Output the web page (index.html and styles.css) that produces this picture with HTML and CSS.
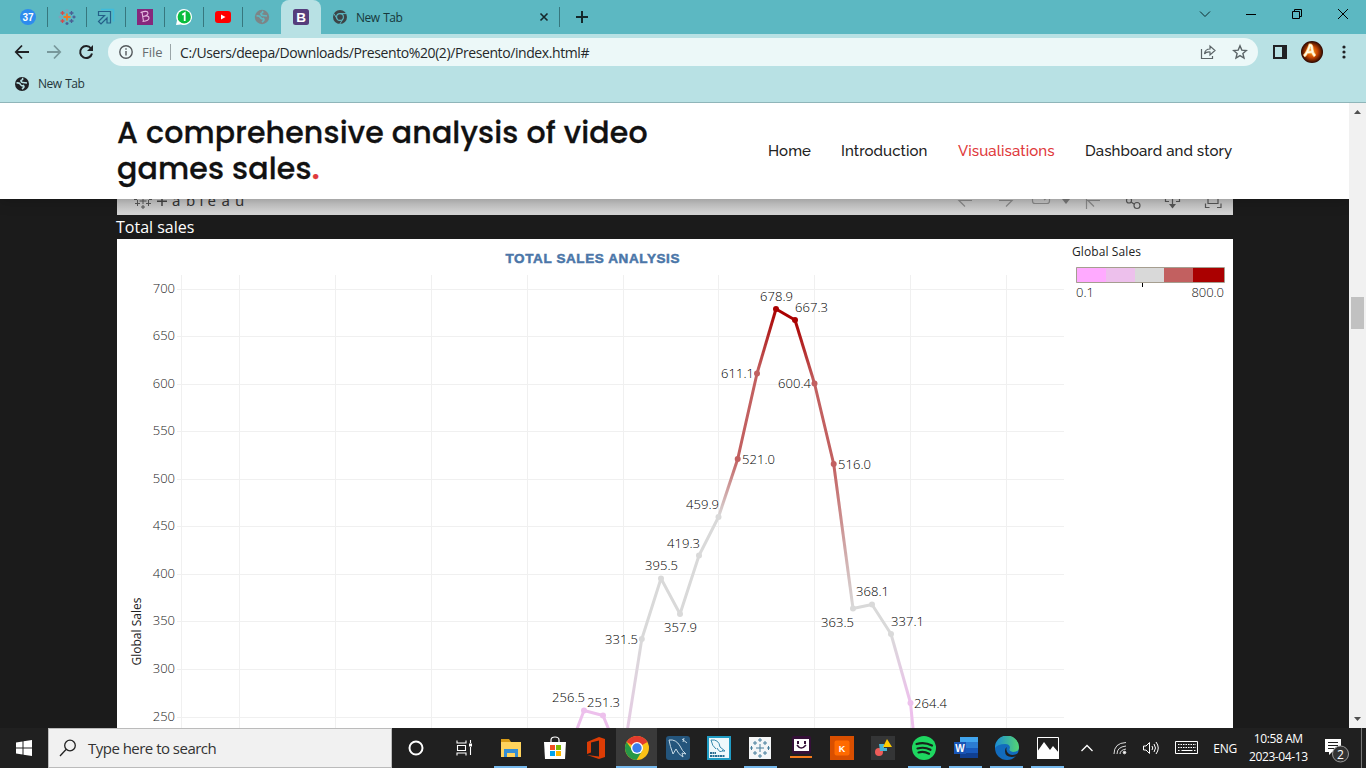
FILE: index.html
```
<!DOCTYPE html>
<html lang="en">
<head>
<meta charset="utf-8">
<title>Video games sales</title>
<link rel="stylesheet" href="styles.css">
</head>
<body>
<div class="screen">
  <div class="tabs">
    <div class="pin"><svg width="18" height="18"><circle cx="9" cy="9" r="8" fill="#2d8cee"/><text x="9" y="12.700" class="n37">37</text></svg></div>
    <div class="pin"><svg width="18" height="18" fill="none" stroke-width="1.3"><path stroke="#eb7a24" stroke-width="1.8" d="M9 5.500v7M5.500 9h7"/><path stroke="#d64a4a" d="M4.500 3v4M2.500 5h4M4.500 11v4M2.500 13h4"/><path stroke="#4a5f94" d="M13.500 3v4M11.500 5h4M13.500 11v4M11.500 13h4M9 14v3M7.500 15.500h3M16 7.500v3M14.500 9h3"/><path stroke="#82a0b8" d="M9 1v3M7.500 2.500h3M2 7.500v3M.5 9h3"/></svg></div>
    <div class="pin"><svg width="18" height="18" fill="none"><path d="M4 1.500h12.500v12" stroke="#3fbcdc" stroke-width="1.500"/><path d="M1.500 3.500h12v11.500h-3.500V10L4 16l-2.500-2.500L7.500 7.500h-6z" stroke="#245f88" stroke-width="1.200"/></svg></div>
    <div class="pin"><svg width="18" height="18"><path fill="#86287c" d="M1 1h16v16H1z"/><path d="M6 4l1.500 9.500M4.500 4.500q7-2.500 7.500.5 0 2.500-5 3.500 6-1.500 6 1.500 0 3-6.500 3.500" fill="none" stroke="#e5b8df" stroke-width="1.100"/></svg></div>
    <div class="pin"><svg width="18" height="18"><path fill="#fff" d="M9 1a8 8 0 1 1-3 15.400L1 17l1-4.500A8 8 0 0 1 9 1z"/><circle cx="9.200" cy="8.900" r="6.600" fill="#09bd3d"/><path d="M7.200 6.700L9.700 5.200v7.800" fill="none" stroke="#fff" stroke-width="1.800"/></svg></div>
    <div class="pin"><svg width="18" height="18"><rect x="1" y="3" width="16" height="12" rx="3" fill="#f00"/><path fill="#fff" d="M7 6.500v5L11.500 9z"/></svg></div>
    <div class="pin last"><svg width="18" height="18"><circle cx="9" cy="9" r="7.200" fill="#7c8587"/><path d="M3.500 8q3-.5 4 1.500t3 1q1.500 1.500-1.500 3.500M9 3.200q2 1-1 2.300 0 2 2 2l4 .5" fill="none" stroke="#5cb8c2" stroke-width="1.700"/></svg></div>
    <div class="active"><svg width="18" height="18"><rect x="1" y="1" width="16" height="16" rx="2.500" fill="#563d7c"/><text x="9" y="13.800" class="bs">B</text></svg></div>
    <div class="tab">
      <svg width="16" height="16"><circle cx="8" cy="8" r="7" fill="#3c4447"/><circle cx="8" cy="8" r="3.400" fill="none" stroke="#5cb8c2" stroke-width="1.100"/><path d="M8 4.600h6.500M5 9.700L1.800 4.500M11 9.700l-3.200 5.300" stroke="#5cb8c2"/></svg>
      <span class="tabname">New Tab</span>
      <svg class="x" width="10" height="10"><path d="M1.500 1.500l7 7m0-7l-7 7" stroke="#15282b" stroke-width="1.600"/></svg>
    </div>
    <svg class="plus" width="14" height="14"><path d="M7 1v12M1 7h12" stroke="#15282b" stroke-width="2"/></svg>
    <div class="win">
      <svg width="12" height="12" fill="none" stroke="#102a2d"><path d="M1 3.500l5 5 5-5"/></svg>
      <svg width="12" height="12"><path d="M1 6.500h10" stroke="#000"/></svg>
      <svg width="12" height="12" fill="none" stroke="#000"><path d="M1.500 3.500h7v7h-7zM3.500 3.500v-2h7v7h-2"/></svg>
      <svg width="12" height="12"><path d="M1 1l10 10m0-10L1 11" stroke="#000"/></svg>
    </div>
  </div>
  <div class="bar">
    <svg width="16" height="16" fill="none" stroke="#202124" stroke-width="1.800"><path d="M15 8H2M8 1.500L1.800 8 8 14.500"/></svg>
    <svg width="16" height="16" fill="none" stroke="#78989b" stroke-width="1.800"><path d="M1 8h13M8 1.500L14.200 8 8 14.500"/></svg>
    <svg width="16" height="16"><path d="M13 4.500A6 6 0 1 0 14 9.500" fill="none" stroke="#202124" stroke-width="2"/><path d="M15 1v6H9z" fill="#202124"/></svg>
    <div class="omni">
      <svg width="14" height="14" fill="none" stroke="#54595c" stroke-width="1.400"><circle cx="7" cy="7" r="6.200"/><path d="M7 6v4.500M7 3.300v1.500"/></svg>
      <span class="file">File</span><i class="sep"></i><span class="url">C:/Users/deepa/Downloads/Presento%20(2)/Presento/index.html#</span>
      <svg class="share" width="16" height="16" fill="none" stroke="#5b6467" stroke-width="1.200"><path d="M1.500 5v9.500h11V12M4.500 10q.5-5 5.500-5V2l5 4.500-5 4.500V8q-4-.3-5.500 2z"/></svg>
      <svg width="16" height="16" fill="none" stroke="#5b6467" stroke-width="1.400"><path d="M8 1.800l1.800 4.300 4.600.4-3.500 3 1.100 4.500-4-2.400L4 14l1.100-4.500-3.500-3 4.600-.4z"/></svg>
    </div>
    <svg class="side" width="14" height="14"><path fill="#202124" d="M0 0h14v14H0z"/><path fill="#b8e1e4" d="M2 2h7v10H2z"/></svg>
    <svg class="ava" width="22" height="22"><defs><radialGradient id="fire"><stop offset="0" stop-color="#f79a20"/><stop offset=".5" stop-color="#c84600"/><stop offset="1" stop-color="#260500"/></radialGradient></defs><circle cx="11" cy="11" r="11" fill="url(#fire)"/><path d="M3 15q3-2 6-11 2 0 2 4t3 7M5.500 11.500l7-1" stroke="#ffc873" stroke-width="3.200" fill="none"/><path d="M3 15q3-2 6-11 2 0 2 4t3 7M5.500 11.500l7-1" stroke="#fffbe8" stroke-width="1.700" fill="none"/></svg>
    <svg class="dots" width="4" height="14" fill="#202124"><circle cx="2" cy="2" r="1.600"/><circle cx="2" cy="7" r="1.600"/><circle cx="2" cy="12" r="1.600"/></svg>
  </div>
  <div class="marks"><svg width="14" height="14"><circle cx="7" cy="7" r="7" fill="#202124"/><path d="M1.500 6q3-.5 4 1.500t3 1q1.500 1.500-1.500 3.500M7 1.200q2 1-1 2.300 0 2 2 2l4 .5" fill="none" stroke="#b8e1e4" stroke-width="1.600"/></svg><span class="mark">New Tab</span></div>
  <div class="view">
    <div class="page">
      <div class="head">
        <h1 class="brand">A comprehensive analysis of video<br>games sales<b class="dot">.</b></h1>
        <div class="nav"><span class="n1">Home</span><span class="n2">Introduction</span><span class="n3">Visualisations</span><span class="n4">Dashboard and story</span></div>
      </div>
      <div class="wrap">
        <svg class="tableau" width="1116" height="16" viewBox="117 199 1116 16">
          <g fill="none" stroke="#555"><path d="M143 198v6M139.500 201h7M137.500 200v6M135 203.500h5M148.500 200v6M146 203.500h5M143 205v4M141 207h4M134 199.500h3M149 199.500h3"/></g>
          <path d="M162 198v8M157 201.200h10" stroke="#444" stroke-width="1.500"/>
          <text class="tlogo" x="172 186 199.500 207.500 221.500 235" y="206">ableau</text>
          <g fill="none" stroke="#888" stroke-width="1.200"><path d="M972 200.500h-13l6 6M999 200.500h13l-6 6M1032.500 198v3q0 2.500 2.500 2.500h12q2.500 0 2.500-2.500v-3M1044 200l3-2M1086.500 198v11M1100 200.500h-12l6 6"/></g>
          <path d="M1062 199h8l-4 5z" fill="#777"/>
          <g fill="none" stroke="#555" stroke-width="1.200"><circle cx="1129" cy="200.500" r="2.500"/><circle cx="1137" cy="205.500" r="3"/><path d="M1131 202l3 2M1169 201.500h-3.500V198M1176 201.500h3.500V198M1172.500 198v7M1205.500 203.500v4h4M1217 207.500h4v-4M1208 198v5.500h10V198"/></g>
          <path d="M1169 204h7l-3.500 4.500z" fill="#555"/>
        </svg>
        <div class="cap"><span class="captxt">Total sales</span></div>
        <svg class="chart" width="1116" height="489" viewBox="117 239 1116 489">
          <defs>
            <linearGradient id="a" gradientUnits="userSpaceOnUse" x1="0" y1="745" x2="0" y2="639"><stop stop-color="#e8c8e6"/><stop offset="1" stop-color="#d9d9d9"/></linearGradient>
            <linearGradient id="b" gradientUnits="userSpaceOnUse" x1="0" y1="517" x2="0" y2="459"><stop stop-color="#d9d9d9"/><stop offset="1" stop-color="#c26060"/></linearGradient>
            <linearGradient id="c" gradientUnits="userSpaceOnUse" x1="0" y1="373" x2="0" y2="309"><stop stop-color="#c26060"/><stop offset="1" stop-color="#a00"/></linearGradient>
            <linearGradient id="d" gradientUnits="userSpaceOnUse" x1="0" y1="383" x2="0" y2="320"><stop stop-color="#c26060"/><stop offset="1" stop-color="#a00"/></linearGradient>
            <linearGradient id="e" gradientUnits="userSpaceOnUse" x1="0" y1="608" x2="0" y2="464"><stop stop-color="#d9d9d9"/><stop offset="1" stop-color="#c26060"/></linearGradient>
            <linearGradient id="f" gradientUnits="userSpaceOnUse" x1="0" y1="703" x2="0" y2="634"><stop stop-color="#edc0ec"/><stop offset="1" stop-color="#d9d9d9"/></linearGradient>
          </defs>
          <path stroke="#f0f0f0" fill="none" d="M181.500 275v453M239.500 275v453M335.500 275v453M431.500 275v453M527.500 275v453M623.500 275v453M718.500 275v453M814.500 275v453M910.500 275v453M1006.500 275v453M177 289.500h887M177 336.500h887M177 384.500h887M177 431.500h887M177 479.500h887M177 526.500h887M177 574.500h887M177 621.500h887M177 669.500h887M177 717.500h887"/>
          <g fill="none" stroke-width="3" stroke-linejoin="round">
            <path stroke="#edc0ec" d="M577 729L584 710.500 603 715.500 609 730M910.500 703L913.200 730"/>
            <path stroke="url(#a)" d="M625 745L641.800 639"/>
            <path stroke="#d9d9d9" d="M641.800 639L661 578.500 680 614 699 555.500 718.500 517M853 608.500L872 604.500 891 634"/>
            <path stroke="url(#b)" d="M718.500 517L737.700 459"/>
            <path stroke="#c26060" d="M737.700 459L757 373.500M814.500 383.500L833.700 464"/>
            <path stroke="url(#c)" d="M757 373.500L776 309"/>
            <path stroke="#a00" d="M776 309L795 320"/>
            <path stroke="url(#d)" d="M795 320L814.500 383.500"/>
            <path stroke="url(#e)" d="M833.700 464L853 608.500"/>
            <path stroke="url(#f)" d="M891 634L910.500 703"/>
          </g>
          <g fill="#edc0ec"><circle cx="584" cy="710.500" r="3"/><circle cx="603" cy="715.500" r="3"/><circle cx="910.500" cy="703" r="3"/></g>
          <g fill="#d9d9d9"><circle cx="641.800" cy="639" r="3"/><circle cx="661" cy="578.500" r="3"/><circle cx="680" cy="614" r="3"/><circle cx="699" cy="555.500" r="3"/><circle cx="718.500" cy="517" r="3"/><circle cx="853" cy="608.500" r="3"/><circle cx="872" cy="604.500" r="3"/><circle cx="891" cy="634" r="3"/></g>
          <g fill="#c26060"><circle cx="737.700" cy="459" r="3"/><circle cx="757" cy="373.500" r="3"/><circle cx="814.500" cy="383.500" r="3"/><circle cx="833.700" cy="464" r="3"/></g>
          <g fill="#a00"><circle cx="776" cy="309" r="3"/><circle cx="795" cy="320" r="3"/></g>
          <g class="lab">
            <text x="552" y="702" textLength="33">256.5</text><text x="587" y="707" textLength="33">251.3</text><text x="605" y="644" textLength="33">331.5</text><text x="645" y="570" textLength="33">395.5</text><text x="664" y="632" textLength="33">357.9</text><text x="667" y="548" textLength="33">419.3</text><text x="686" y="509" textLength="33">459.9</text><text x="742" y="464" textLength="33">521.0</text><text x="721" y="378" textLength="33">611.1</text><text x="760" y="301" textLength="33">678.9</text><text x="795" y="312" textLength="33">667.3</text><text x="778" y="388" textLength="33">600.4</text><text x="838" y="469" textLength="33">516.0</text><text x="821" y="627" textLength="33">363.5</text><text x="856" y="596" textLength="33">368.1</text><text x="891" y="626" textLength="33">337.1</text><text x="914" y="708" textLength="33">264.4</text>
          </g>
          <g class="ax"><text x="175" y="293">700</text><text x="175" y="340">650</text><text x="175" y="388">600</text><text x="175" y="435">550</text><text x="175" y="483">500</text><text x="175" y="530">450</text><text x="175" y="578">400</text><text x="175" y="625">350</text><text x="175" y="673">300</text><text x="175" y="721">250</text></g>
          <text class="ttl" x="505.500" y="263" textLength="174">TOTAL SALES ANALYSIS</text>
          <text class="gs" transform="translate(141 665.500) rotate(-90)" textLength="68">Global Sales</text>
          <text class="gs" x="1072" y="256" textLength="69">Global Sales</text>
          <path fill="#faf" d="M1076 267h30v16h-30z"/><path fill="#edc0ec" d="M1106 267h29v16h-29z"/><path fill="#d9d9d9" d="M1135 267h29v16h-29z"/><path fill="#c26060" d="M1164 267h29v16h-29z"/><path fill="#a00" d="M1193 267h31v16h-31z"/>
          <path fill="none" stroke="#a59e90" d="M1076.500 267.500h148v15h-148z"/><path stroke="#000" d="M1142.500 283v4"/>
          <g class="leg"><text x="1076" y="297" textLength="18">0.1</text><text x="1191.500" y="297" textLength="32.500">800.0</text></g>
        </svg>
      </div>
    </div>
    <div class="scroll"><svg width="17" height="17"><path fill="#505050" d="M5 11h7L8.500 7z"/></svg><div class="thumb"></div><svg width="17" height="17"><path fill="#505050" d="M5 6h7l-3.500 4z"/></svg></div>
  </div>
  <div class="task">
    <div class="start"><svg width="16" height="16" fill="#fff"><path d="M0 2.500l6.500-1v6H0zM7.500 1.300L16 0v7.500H7.500zM0 8.500h6.500v6L0 13.500zM7.500 8.500H16V16l-8.500-1.200z"/></svg></div>
    <div class="search"><svg width="18" height="18" fill="none" stroke="#222" stroke-width="1.300"><circle cx="11" cy="6.500" r="5.300"/><path d="M7 10.500L1 17"/></svg><span class="stxt">Type here to search</span></div>
    <div class="big"><svg width="18" height="18"><circle cx="9" cy="9" r="6.500" fill="none" stroke="#fff" stroke-width="2"/></svg></div>
    <div class="big tv"><svg width="18" height="18" fill="none" stroke="#fff" stroke-width="1.100"><path d="M2 1.500v2.500h9V1.500M2.500 6.500h8v5h-8zM2 16.500V14h9v2.500M15.500 1v3M15.500 8v8"/><path stroke-width="3" d="M14 6h3"/></svg></div>
    <div class="app first on"><svg width="24" height="24"><path fill="#d99c17" d="M2 3h8l2 3v3H2z"/><path fill="#ffd35c" d="M2 6h20v15H2z"/><path fill="#348ed4" d="M5 13h14v8h-3v-4H8v4H5z"/></svg></div>
    <div class="app"><svg width="24" height="24"><path d="M8 7V4q0-3 4-3t4 3v3" fill="none" stroke="#fff" stroke-width="1.200"/><path fill="#fff" d="M1 6h22l-1 17H2z"/><path fill="#f25022" d="M7 9h5v5H7z"/><path fill="#7fba00" d="M13 9h5v5h-5z"/><path fill="#00a4ef" d="M7 15h5v5H7z"/><path fill="#ffb900" d="M13 15h5v5h-5z"/></svg></div>
    <div class="app"><svg width="24" height="24"><path fill="#dc3c05" d="M3 6l12-5 6 2v18l-6 2-12-4 12 1.500V4.500L7 6.500v10L3 18z"/></svg></div>
    <div class="app on hot"><svg width="24" height="24"><circle cx="12" cy="12" r="12" fill="#fbc116"/><path fill="#e33b2e" d="M12 12L1.600 6a12 12 0 0 1 20.800 0z"/><path fill="#279847" d="M1.600 6A12 12 0 0 0 11.500 24L17 15l-9.500-.5z"/><circle cx="12" cy="12" r="6" fill="#fff"/><circle cx="12" cy="12" r="4.700" fill="#3b7ded"/></svg></div>
    <div class="app"><svg width="24" height="24"><rect width="24" height="24" rx="3" fill="#24557c"/><path d="M3 4q7-1 11 6 2 5 6 8l-4-1 1 4q-5-3-7-8l-3 5Q4 10 3 4M16 3l5 4M18 2l-1 4" fill="none" stroke="#c7dae5"/></svg></div>
    <div class="app"><svg width="24" height="24"><path fill="#eef8fc" stroke="#209cc4" stroke-width="2" d="M1 1h22v22H1z"/><path d="M4 4q8-1 9 7l5 4-3 0M4 4q1 6 5 9M10 12q3 6 6 2" fill="none" stroke="#3587ac"/><path d="M3 17h6M3 20h15" stroke="#276d92" stroke-width="2" stroke-dasharray="2 .5"/></svg></div>
    <div class="app on"><svg width="24" height="24"><path fill="#f4f6f7" d="M1 1h22v22H1z"/><path d="M12 8v8M8 12h8M7 5v4M5 7h4M17 5v4M15 7h4M7 15v4M5 17h4M17 15v4M15 17h4M12 2v4M10 4h4M12 18v4M10 20h4M3.500 10v4M2 12h3M20.500 10v4M19 12h3" stroke="#477e9c"/></svg></div>
    <div class="app"><svg width="24" height="24"><rect x="3" width="19" height="18" rx="2" fill="#351038"/><path fill="#fff" d="M5 3h15v12H5z"/><path d="M8 9q4 6 9 0" fill="none" stroke="#351038" stroke-width="1.500"/><path d="M9 5v3M16 5v3" stroke="#351038" stroke-width="2"/><path fill="#f47a1c" d="M1 20h22v2H1z"/></svg></div>
    <div class="app"><svg width="24" height="24"><path fill="#d94f00" d="M0 0h24v24H0z"/><rect x="4.500" y="4.500" width="15" height="15" rx="2" fill="#ff6a00"/><text x="12" y="15.500" class="k">K</text></svg></div>
    <div class="app"><svg width="24" height="24"><path fill="#343536" d="M0 0h24v24H0z"/><circle cx="8" cy="16" r="4" fill="#ee5c59"/><path fill="#46b5d4" d="M8 8h5v4h3v3H9z"/><path fill="#ffce00" d="M16 3l5 8h-9z"/></svg></div>
    <div class="app on"><svg width="24" height="24"><circle cx="12" cy="12" r="12" fill="#1ed760"/><path d="M4.500 8q8-2.500 15.500 1.500M5.500 12.500q7-2 13 1.300M6.500 16.500q5.500-1.500 10.500 1.200" fill="none" stroke="#17241b" stroke-width="2.200" stroke-linecap="round"/></svg></div>
    <div class="app on"><svg width="24" height="24"><path fill="#41a5ee" d="M6 1h18v6H6z"/><path fill="#2b7cd3" d="M6 6h18v6H6z"/><path fill="#185abd" d="M6 12h18v5H6z"/><path fill="#103f91" d="M6 17h18v5H6z"/><path fill="#1854b5" d="M0 6h12v12H0z"/><text x="6" y="15.500" class="w">W</text></svg></div>
    <div class="app on"><svg width="24" height="24"><defs><linearGradient id="ed"><stop stop-color="#1b8bd5"/><stop offset="1" stop-color="#55d672"/></linearGradient></defs><circle cx="12" cy="12" r="12" fill="#126bbd"/><path fill="url(#ed)" d="M0 12a12 12 0 0 1 24-1q0 5-6 5-5-1-3-4 0-4-5-4Q3 8 0 12z"/><path fill="#202020" d="M12 11q-2 4 2 7 4 2 9-.5l1.500 2L23 24h-3l1-3.500q-11 2-11-5.500 0-3 2-4z"/></svg></div>
    <div class="app on"><svg width="24" height="24"><path fill="#202020" stroke="#fff" d="M1.500 1.500h21v21h-21z"/><path fill="#fff" d="M1 16l7-10 6 8 3-4 6 7v6H1z"/></svg></div>
    <div class="tray">
      <svg class="t1" width="14" height="10"><path d="M1.500 8L7 2.500 12.500 8" fill="none" stroke="#fff" stroke-width="1.300"/></svg>
      <svg class="t2" width="14" height="14" fill="none" stroke="#ddd"><path d="M1 13Q1 2 13 1.500M4 13q0-7 9-8M7 13q0-4 6-5"/><circle cx="11.500" cy="11.500" r="1.300" fill="#fff"/></svg>
      <svg class="t3" width="18" height="14" fill="none" stroke="#fff"><path d="M1.500 5v4H4l3.500 3.500v-11L4 5zM10 5q1.500 2 0 4M12 3q3 4 0 8M14 1q4.500 6 0 12"/></svg>
      <svg class="t4" width="24" height="14" fill="none" stroke="#fff"><path d="M.5.500h22v12H.5z"/><path stroke-dasharray="1.500 1" d="M3 3.500h18M3 6.500h18M3 9.500h2M19 9.500h2"/><path d="M6.500 9.500h11"/></svg>
      <span class="eng">ENG</span>
      <div class="clock"><span class="c1">10:58 AM</span><span class="c2">2023-04-13</span></div>
      <svg class="t5" width="26" height="26"><path fill="#fff" d="M1 2h16v13H8l-3 3v-3H1z"/><path stroke="#222" d="M4 5.500h10M4 8.500h10M4 11.500h6"/><circle cx="16.500" cy="17" r="8" fill="#333" stroke="#999"/><text x="16.500" y="21.500" class="two">2</text></svg>
      <i class="peek"></i>
    </div>
  </div>
</div>
</body>
</html>
```
FILE: styles.css
```
* { box-sizing: border-box; }
body { margin: 0; font-family: "Open Sans", "Noto Sans", sans-serif; }
svg { display: block; flex: none; }
span { white-space: nowrap; }
.screen { width: 1366px; height: 768px; display: flex; flex-direction: column; overflow: hidden; }
.tabs { height: 34px; background: #5cb8c2; display: flex; align-items: center; padding-left: 8px; flex: none; }
.pin { width: 39px; height: 20px; border-right: 1px solid #37777e; display: flex; align-items: center; justify-content: center; flex: none; }
.pin:first-child { width: 40px; }
.last { border-right-color: transparent; width: 38px; }
.active { width: 40px; height: 34px; background: #b8e1e4; border-radius: 8px 8px 0 0; display: flex; align-items: center; justify-content: center; flex: none; }
.tab { width: 239px; height: 20px; border-right: 1px solid #37777e; display: flex; align-items: center; padding-left: 11px; flex: none; }
.tabname { font-size: 12px; letter-spacing: -0.5px; word-spacing: 1px; color: #17383c; margin-left: 8px; flex: 1; }
.x { margin-right: 10px; }
.plus { margin-left: 15px; }
.win { margin-left: auto; display: flex; gap: 34px; padding: 0 17px 6px 0; }
.n37 { font: bold 10px "Liberation Sans", sans-serif; fill: #fff; text-anchor: middle; }
.bs { font: bold 13.500px "Liberation Sans", sans-serif; fill: #fff; text-anchor: middle; }
.bar { height: 35px; background: #b8e1e4; display: flex; align-items: center; padding: 1px 20px 0 14px; gap: 16px; flex: none; }
.omni { width: 1150px; height: 28px; border-radius: 14px; background: #ecf8f8; display: flex; align-items: center; padding: 0 10px 0 11px; margin-left: -2px; }
.file { font-size: 13px; color: #666c6f; margin-left: 9px; width: 21px; }
.sep { width: 1px; height: 16px; background: #9aa5a7; margin: 0 9px 0 7px; }
.url { font-size: 14px; color: #25282a; letter-spacing: -0.41px; }
.share { margin: 0 16px 0 auto; }
.side { margin-left: -1px; }
.ava { margin: 0 2px 0 -2px; }
.dots { margin-left: 1px; }
.marks { height: 34px; background: #b8e1e4; border-bottom: 1px solid #8fb5b9; display: flex; align-items: center; padding: 0 0 4px 15px; gap: 9px; flex: none; }
.mark { font-size: 12px; color: #25363a; letter-spacing: -0.5px; word-spacing: 1px; }
.view { height: 625px; display: flex; flex: none; }
.page { width: 1349px; background: #1b1b1b; overflow: hidden; }
.head { height: 96px; background: #fff; box-shadow: 0 0 15px rgba(0,0,0,.25); position: relative; display: flex; justify-content: space-between; padding: 0 116px 0 117px; }
.brand { margin: 0; padding-top: 12px; font: 500 30px/36px Poppins, Inter, sans-serif; letter-spacing: .15px; color: #111; -webkit-text-stroke: .3px; }
.dot { color: #e03a3c; font-weight: 600; }
.nav { display: flex; gap: 30px; align-items: center; font: 500 15px/20px Raleway, Lato, sans-serif; color: #222; letter-spacing: .08px; }
.n1 { width: 43px; }
.n2 { width: 87px; }
.n3 { width: 97px; color: #e03a3c; }
.n4 { width: 148px; }
.wrap { width: 1116px; margin-left: 117px; }
.tableau { background: linear-gradient(#bebebe, #d3d3d3 14px); }
.tlogo { font: 15px "Noto Sans", sans-serif; fill: #333; }
.cap { height: 24px; display: flex; align-items: center; color: #fff; margin-left: -1px; }
.captxt { font-size: 16px; }
.chart { background: #fff; }
.lab { font: 300 13px "Open Sans", sans-serif; fill: #000; }
.ax { font: 300 13px "Open Sans", sans-serif; fill: #222; text-anchor: end; }
.leg { font: 300 13px "Open Sans", sans-serif; fill: #111; }
.gs { font: 12px "Open Sans", sans-serif; fill: #222; }
.ttl { font: bold 13.500px "Liberation Sans", sans-serif; fill: #4b76a8; stroke: #4b76a8; stroke-width: .5px; }
.scroll { width: 17px; background: #f1f1f1; display: flex; flex-direction: column; }
.thumb { width: 13px; height: 32px; margin: 177px 0 auto 2px; background: #c1c1c1; }
.task { height: 40px; background: #202020; display: flex; flex: none; color: #fff; }
.start { width: 48px; display: flex; align-items: center; justify-content: center; }
.search { width: 344px; border: 1px solid #bbb; background: #f1f1f1; display: flex; align-items: center; padding-left: 10px; gap: 11px; }
.stxt { font-size: 15px; color: #333; letter-spacing: -.52px; }
.big { width: 48px; display: flex; align-items: center; justify-content: center; }
.tv { width: 50px; padding-right: 2px; }
.app { width: 41.100px; display: flex; align-items: center; justify-content: center; border: solid transparent; border-width: 2px 0 2px; flex: none; }
.first { margin-right: 3px; }
.on { background: linear-gradient(#76b9ed, #76b9ed) center bottom / 33px 2px no-repeat border-box; }
.hot { background: linear-gradient(#76b9ed, #76b9ed) center bottom / 100% 2px no-repeat border-box #3a3a3a; }
.k { font: bold 9px "Liberation Sans", sans-serif; fill: #fff; text-anchor: middle; }
.w { font: bold 10px "Liberation Sans", sans-serif; fill: #fff; text-anchor: middle; }
.tray { flex: 1; display: flex; align-items: center; padding-left: 12px; }
.t2 { margin-left: 19px; }
.t3 { margin-left: 15px; }
.t4 { margin-left: 15px; }
.eng { width: 24px; margin-left: 14px; font-size: 12px; letter-spacing: -.3px; }
.clock { display: flex; flex-direction: column; align-items: center; width: 60px; margin-left: 11px; font-size: 12px; line-height: 18px; letter-spacing: -.4px; }
.t5 { margin: 4px 0 0 16px; }
.two { font: 12px "Open Sans", sans-serif; fill: #fff; text-anchor: middle; }
.peek { width: 1px; height: 40px; background: #777; margin-left: auto; margin-right: 4px; }
```
